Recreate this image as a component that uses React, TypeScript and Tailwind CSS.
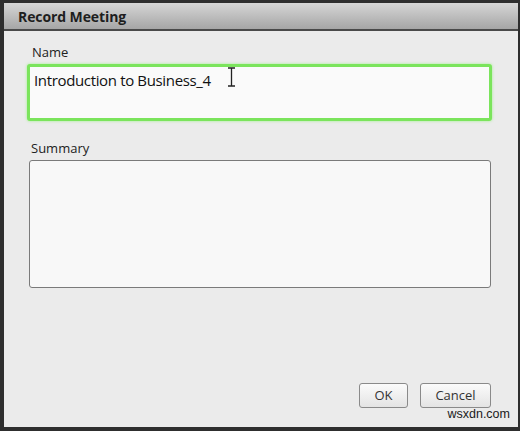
import React from 'react';

const font = { fontFamily: '"Open Sans", "Noto Sans", sans-serif' };

function IBeam() {
  return (
    <svg width="9" height="20" viewBox="0 0 9 20" className="absolute left-[197px] top-[0px]">
      <path d="M1 1h7M1 19h7M4.5 1v18" stroke="#222" strokeWidth="1.3" fill="none" />
    </svg>
  );
}

export default function App() {
  return (
    <div className="w-[520px] h-[431px] bg-[#2e2e2e] pt-[3px] pl-[4px] pr-[2px] pb-[4px]" style={font}>
      <div className="relative flex h-full flex-col bg-[#ebebeb]">
        <div className="flex h-[28px] items-center border-b-2 border-[#4a4a4a] bg-gradient-to-b from-[#d6d6d6] to-[#a6a6a6] pl-[14px]">
          <span className="text-[14px] font-bold text-[#1e1e1e] tracking-[-0.1px]">Record Meeting</span>
        </div>

        <div className="flex flex-col pl-[23px] pr-[26px] pt-[12px]">
          <label className="pl-[5px] text-[13px] leading-[18px] text-[#222]">Name</label>
          <div className="relative mt-[3px] h-[57px] rounded-[3px] border-[3px] border-[#7be45c] bg-[#fafafa] shadow-[0_0_3px_#9ef08a] pl-[4px] pt-[1px]">
            <span className="text-[15px] text-[#111] tracking-[-0.35px]">Introduction to Business_4</span>
            <IBeam />
          </div>

          <label className="mt-[18px] pl-[4px] text-[13px] leading-[18px] text-[#222]">Summary</label>
          <div className="ml-[2px] mr-[1px] mt-[3px] h-[128px] rounded-[3px] border border-[#7a7a7a] bg-[#f8f8f8]" />
        </div>

        <div className="mt-auto flex justify-end gap-[12px] pr-[27px] pb-[19px]">
          <button className="h-[25px] w-[49px] rounded-[3px] border border-[#8a8a8a] bg-gradient-to-b from-[#fbfbfb] to-[#e4e4e4] text-[13px] text-[#333]">
            OK
          </button>
          <button className="h-[25px] w-[71px] rounded-[3px] border border-[#8a8a8a] bg-gradient-to-b from-[#fbfbfb] to-[#e4e4e4] text-[13px] text-[#333]">
            Cancel
          </button>
        </div>

        <span className="absolute right-[8px] bottom-[3px] text-[12.5px] text-[#1a1a1a]" style={{ fontFamily: '"Liberation Sans", sans-serif' }}>
          wsxdn.com
        </span>
      </div>
    </div>
  );
}
